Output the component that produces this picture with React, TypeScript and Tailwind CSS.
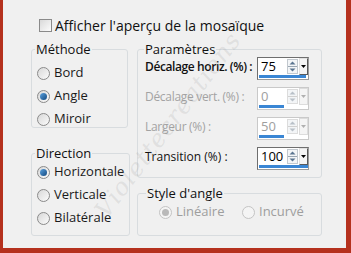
import React from "react";

const font = "font-['Segoe_UI','Open_Sans','Noto_Sans',sans-serif]";

function Radio({ checked, disabled }: { checked?: boolean; disabled?: boolean }) {
  return (
    <span
      className={`w-[13px] h-[13px] rounded-full border flex items-center justify-center shrink-0 ${
        disabled ? "border-[#c4c4c4] bg-[#f4f4f4]" : "border-[#8a8a8a] bg-gradient-to-br from-[#d8d8d8] to-[#fbfbfb]"
      }`}
    >
      {checked && (
        <span
          className={`w-[7px] h-[7px] rounded-full ${
            disabled ? "bg-[#b9b9b9]" : "bg-gradient-to-br from-[#5aa2e0] to-[#134a80]"
          }`}
        />
      )}
    </span>
  );
}

function RadioRow({ label, checked, disabled }: { label: string; checked?: boolean; disabled?: boolean }) {
  return (
    <div className="flex items-center gap-[4px] h-[16px] whitespace-nowrap">
      <Radio checked={checked} disabled={disabled} />
      <span className={`text-[13px] ${disabled ? "text-[#9e9e9e]" : "text-[#1a1a1a]"}`}>{label}</span>
    </div>
  );
}

function Spin({ value, bar, disabled }: { value: string; bar: number; disabled?: boolean }) {
  const arrow = disabled ? "#b8c0c8" : "#5a7590";
  return (
    <div
      className={`w-[52px] h-[23px] bg-white border flex flex-col shrink-0 ${
        disabled ? "border-[#c9c9c9]" : "border-[#9a9a9a] border-t-[#6e6e6e] border-l-[#6e6e6e]"
      }`}
    >
      <div className="flex-1 flex items-center">
        <span className={`pl-[3px] flex-1 text-[13px] leading-none ${disabled ? "text-[#9e9e9e]" : "text-black"}`}>
          {value}
        </span>
        <svg width="11" height="15" viewBox="0 0 11 15" className="mr-[1px]">
          <rect x="0.5" y="0.5" width="10" height="14" fill="#f3f5f7" stroke={disabled ? "#dcdcdc" : "#c2c8ce"} />
          <line x1="1" y1="7.5" x2="10" y2="7.5" stroke={disabled ? "#d0d0d0" : "#9aa6b2"} />
          <path d="M5.5 2.5 L8.5 5.5 L2.5 5.5 Z" fill={arrow} />
          <path d="M5.5 12.5 L8.5 9.5 L2.5 9.5 Z" fill={arrow} />
        </svg>
        <div
          className={`w-[9px] h-[17px] flex items-center justify-center border ${
            disabled ? "border-[#dcdcdc] bg-[#f4f4f4]" : "border-[#e0e0e0] border-r-[#5a5a5a] border-b-[#5a5a5a] bg-[#f4f4f4]"
          }`}
        >
          <svg width="5" height="3" viewBox="0 0 5 3">
            <path d="M0 0 L5 0 L2.5 3 Z" fill={disabled ? "#b0b0b0" : "#000"} />
          </svg>
        </div>
      </div>
      <div className="h-[3px] ml-[1px] mb-[1px]">
        <div className="h-full bg-[#3a86d4]" style={{ width: bar }} />
      </div>
    </div>
  );
}

function ParamRow({ label, value, bar, disabled, bold }: { label: string; value: string; bar: number; disabled?: boolean; bold?: boolean }) {
  return (
    <div className="flex items-center justify-between h-[23px]">
      <span
        className={`pb-[4px] whitespace-nowrap text-[12px] ${disabled ? "text-[#a3a3a3] tracking-[-0.3px]" : "text-[#111]"} ${
          bold ? "font-semibold tracking-[-0.4px]" : ""
        }`}
      >
        {label}
      </span>
      <Spin value={value} bar={bar} disabled={disabled} />
    </div>
  );
}

export default function App() {
  return (
    <div className={`w-[351px] h-[253px] bg-[#b5311e] pl-[3px] pr-[5px] pb-[5px] ${font} text-[12px]`}>
      <div className="h-full bg-[#f0f0f0] relative overflow-hidden">
        {/* checkbox */}
        <div className="flex items-center gap-[3px] h-[13px] mt-[19px] ml-[36px] whitespace-nowrap">
          <span className="w-[13px] h-[13px] border border-[#8a8a8a] bg-gradient-to-br from-[#d9d9d9] to-[#fcfcfc] shrink-0" />
          <span className="text-[#111] text-[14px]">Afficher l'aperçu de la mosaïque</span>
        </div>

        <div className="flex ml-[28px] mt-[10px] gap-[9px]">
          {/* left column */}
          <div className="w-[97px] flex flex-col gap-[18px]">
            <fieldset className="border border-[#d8dcdf] rounded-[3px] h-[86px] px-[5px]">
              <legend className="ml-[-2px] px-[1px] leading-[14px] text-[13px] text-[#111]">Méthode</legend>
              <div className="flex flex-col gap-[7px] pt-[9px]">
                <RadioRow label="Bord" />
                <RadioRow label="Angle" checked />
                <RadioRow label="Miroir" />
              </div>
            </fieldset>
            <fieldset className="border border-[#d8dcdf] rounded-[3px] h-[90px] px-[5px]">
              <legend className="ml-[-2px] px-[1px] leading-[14px] text-[13px] text-[#111]">Direction</legend>
              <div className="flex flex-col gap-[7px] pt-[4px]">
                <RadioRow label="Horizontale" checked />
                <RadioRow label="Verticale" />
                <RadioRow label="Bilatérale" />
              </div>
            </fieldset>
          </div>

          {/* right column */}
          <div className="w-[185px] flex flex-col gap-[8px]">
            <fieldset className="border border-[#d8dcdf] rounded-[3px] h-[136px] pl-[7px] pr-[12px]">
              <legend className="ml-[-1px] px-[1px] leading-[14px] text-[13px] text-[#111]">Paramètres</legend>
              <div className="flex flex-col gap-[7px] pt-[1px]">
                <ParamRow label="Décalage horiz. (%) :" value="75" bar={47} bold />
                <ParamRow label="Décalage vert. (%) :" value="0" bar={25} disabled />
                <ParamRow label="Largeur (%) :" value="50" bar={25} disabled />
                <ParamRow label="Transition (%) :" value="100" bar={49} />
              </div>
            </fieldset>
            <fieldset className="border border-[#d8dcdf] rounded-[3px] h-[50px] pl-[21px]">
              <legend className="ml-[-13px] px-[1px] leading-[14px] text-[13px] text-[#111]">Style d'angle</legend>
              <div className="flex pt-[4px]">
                <div className="w-[83px]">
                  <RadioRow label="Linéaire" checked disabled />
                </div>
                <RadioRow label="Incurvé" disabled />
              </div>
            </fieldset>
          </div>
        </div>

        {/* watermark */}
        <div className="absolute left-[50px] top-[110px] w-[230px] h-[30px] leading-[30px] text-center -rotate-[53deg] pointer-events-none text-[24px] italic text-[rgba(140,140,140,0.17)] font-['DejaVu_Serif',serif] tracking-[1px]">
          Violettecreations
        </div>
      </div>
    </div>
  );
}
